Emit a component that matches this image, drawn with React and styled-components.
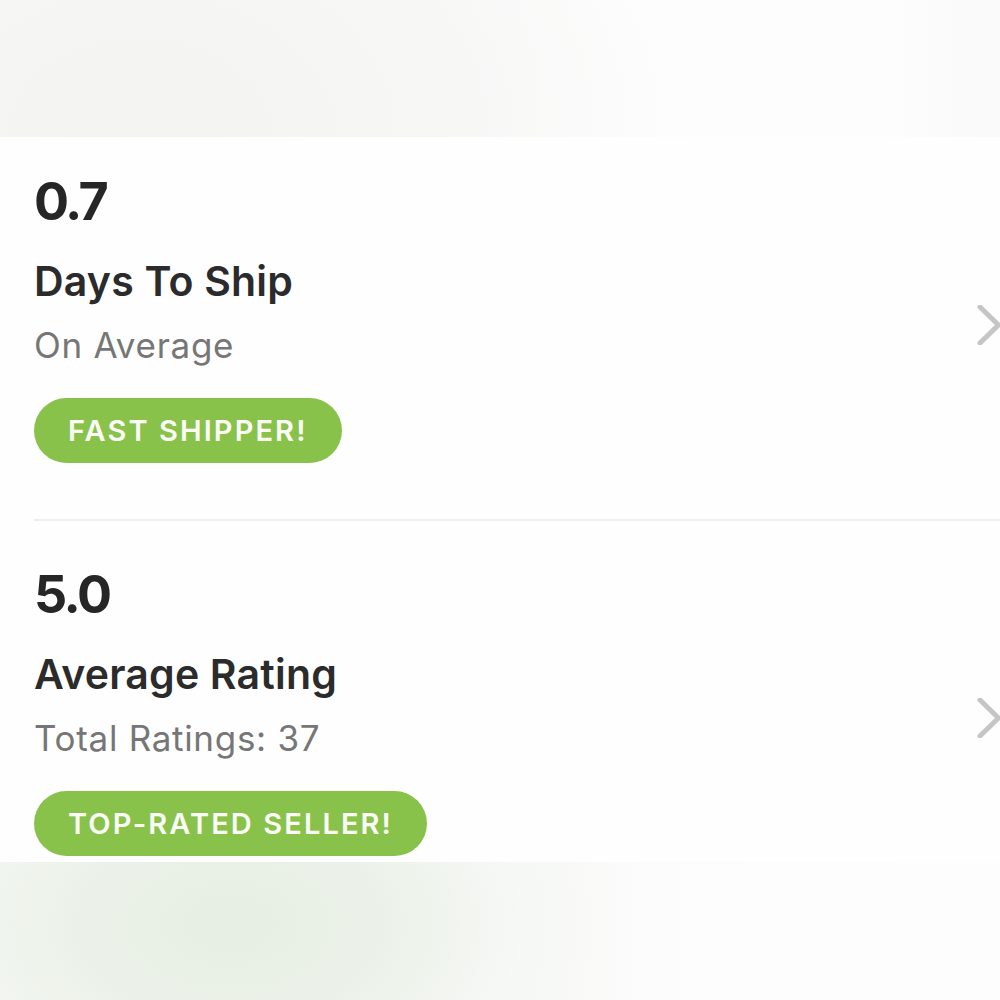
import React from "react";
import styled, { createGlobalStyle } from "styled-components";

const Global = createGlobalStyle`
  html, body { margin: 0; padding: 0; background: #fdfdfd; }
  body { overflow: hidden; font-family: Inter, Lato, "Open Sans", Arial, sans-serif; }
  * { box-sizing: border-box; }
`;

const Page = styled.div`
  width: 1000px;
  height: 1000px;
  display: flex;
  flex-direction: column;
  overflow: hidden;
`;

const TopShade = styled.div`
  height: 137px;
  flex: none;
  background:
    radial-gradient(ellipse 560px 420px at 14% 100%, #f3f3f1 0%, #f6f6f5 45%, rgba(250,250,250,0) 100%),
    linear-gradient(90deg, #f8f8f8 0%, #fbfbfb 45%, #fdfdfd 60%, #fdfdfd 88%, #f9f9f9 100%);
`;

const Card = styled.div`
  height: 725px;
  flex: none;
  background: #fefefe;
  overflow: hidden;
  display: flex;
  flex-direction: column;
`;

const BottomShade = styled.div`
  flex: 1;
  background:
    radial-gradient(ellipse 420px 260px at 23% 45%, #e6eee3 0%, #ebf1e8 35%, rgba(246,248,245,0.6) 70%, rgba(253,253,253,0) 100%),
    linear-gradient(90deg, #f1f4ef 0%, #f6f8f5 50%, #fcfcfc 65%, #fdfdfd 100%);
`;

const Row = styled.div`
  display: flex;
  justify-content: space-between;
  align-items: center;
  padding: ${(p) => p.$top}px 0 56px 34px;
  flex: none;
`;

const Info = styled.div`
  display: flex;
  flex-direction: column;
  align-items: flex-start;
`;

const Value = styled.div`
  font-size: 52px;
  line-height: 52px;
  font-weight: 700;
  color: #262626;
  letter-spacing: -2.5px;
`;

const Title = styled.div`
  margin-top: 33px;
  font-size: 41px;
  line-height: 41px;
  font-weight: 600;
  color: #2b2b2b;
  letter-spacing: 0.2px;
`;

const Subtitle = styled.div`
  margin-top: 26px;
  font-size: 35px;
  line-height: 35px;
  font-weight: 400;
  color: #767676;
  letter-spacing: 0.7px;
`;

const Badge = styled.div`
  margin-top: 35px;
  height: 65px;
  display: inline-flex;
  align-items: center;
  padding: 0 34px;
  border-radius: 33px;
  background: #88c24a;
  color: #fbfdf7;
  font-size: 29px;
  font-weight: 600;
  letter-spacing: 2.1px;
  text-transform: uppercase;
  white-space: nowrap;
`;

const Chevron = styled.svg`
  flex: none;
  width: 26px;
  height: 40px;
  margin-top: 10px;
`;

const Divider = styled.div`
  height: 2px;
  margin-left: 34px;
  background: #efefef;
  flex: none;
`;

function Arrow() {
  return (
    <Chevron viewBox="0 0 26 40">
      <path d="M6 2 L24.5 20 L6 38" fill="none" stroke="#c5c5c5" strokeWidth="5" strokeLinecap="round" strokeLinejoin="round" />
    </Chevron>
  );
}

const stats = [
  { value: "0.7", title: "Days To Ship", sub: "On Average", badge: "Fast Shipper!", top: 39 },
  { value: "5.0", title: "Average Rating", sub: "Total Ratings: 37", badge: "Top-Rated Seller!", top: 48 },
];

export default function App() {
  return (
    <>
      <Global />
      <Page>
        <TopShade />
        <Card>
          {stats.map((s, i) => (
            <React.Fragment key={s.title}>
              {i > 0 && <Divider />}
              <Row $top={s.top}>
                <Info>
                  <Value>{s.value}</Value>
                  <Title>{s.title}</Title>
                  <Subtitle>{s.sub}</Subtitle>
                  <Badge>{s.badge}</Badge>
                </Info>
                <Arrow />
              </Row>
            </React.Fragment>
          ))}
        </Card>
        <BottomShade />
      </Page>
    </>
  );
}
